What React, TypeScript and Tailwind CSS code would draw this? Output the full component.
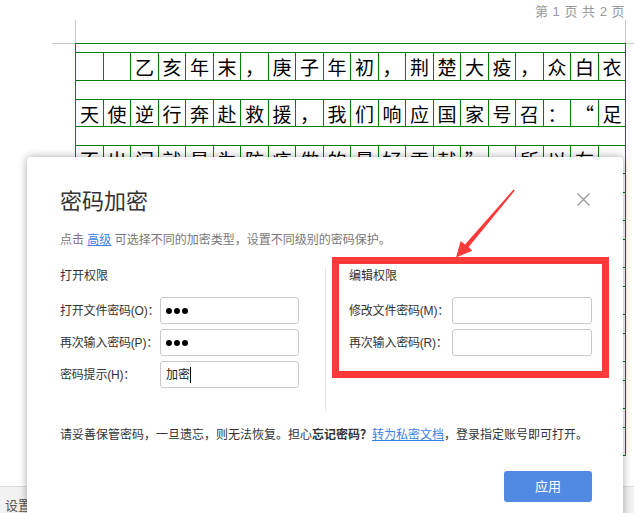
import React from 'react';

const row1 = ['', '', '乙', '亥', '年', '末', '，', '庚', '子', '年', '初', '，', '荆', '楚', '大', '疫', '，', '众', '白', '衣'];
const row2 = '天使逆行奔赴救援，我们响应国家号召：“足'.split('');
const row3 = ['不', '出', '门', '就', '是', '为', '防', '疫', '做', '的', '最', '好', '贡', '献', '”', '，', '所', '以', '在', ''];
const empty = Array(20).fill('');

const CharRow = ({ chars, h }: { chars: string[]; h: string }) => (
  <>
    {chars.map((c, i) => (
      <div key={i} className={`${h} border-r border-b border-[#008000] flex items-center justify-center text-[19px] leading-none text-black`}>
        {c}
      </div>
    ))}
  </>
);

const Spacer = () => <div className="col-span-full h-[19px] border-r border-b border-[#008000]" />;

const Field = ({ label, labelW, inputW, children }: { label: string; labelW: string; inputW: string; children?: React.ReactNode }) => (
  <div className="flex items-center">
    <span className={`${labelW} shrink-0 whitespace-nowrap text-[12px] tracking-[-0.2px] text-[#333]`}>{label}</span>
    <div className={`${inputW} h-[27px] border border-[#cacaca] rounded-[3px] bg-white flex items-center pl-[5px]`}>{children}</div>
  </div>
);

const Dots = () => (
  <div className="flex gap-[2px]">
    <span className="w-[6px] h-[6px] rounded-full bg-black" />
    <span className="w-[6px] h-[6px] rounded-full bg-black" />
    <span className="w-[6px] h-[6px] rounded-full bg-black" />
  </div>
);

export default function App() {
  return (
    <div className="relative w-[634px] h-[513px] overflow-hidden bg-white flex flex-col font-['Liberation_Sans','Noto_Sans_CJK_SC',sans-serif]">
      {/* document page */}
      <div className="h-[20px] flex justify-end pr-[9px] pt-[4px] text-[13px] leading-[15px] tracking-[0.5px] text-[#999]">
        第 1 页 共 2 页
      </div>
      <div className="h-[24px] flex">
        <div className="w-[52px]" />
        <div className="w-[24px] border-r border-b border-[#c8c8c8]" />
        <div className="w-[549px]" />
        <div className="w-[9px] border-l border-b border-[#c8c8c8]" />
      </div>
      <div className="flex-1 min-h-0 overflow-hidden -mt-px font-['Noto_Sans_CJK_SC',sans-serif]">
        <div className="ml-[75px] w-[551px] grid grid-cols-[repeat(10,28px_27px)] border-l border-t border-[#008000]">
          <div className="col-span-full h-[9px] border-r border-b border-[#008000]" />
          <CharRow chars={row1} h="h-[28px]" />
          <Spacer />
          <CharRow chars={row2} h="h-[27px]" />
          <Spacer />
          <CharRow chars={row3} h="h-[28px]" />
          <Spacer />
          <CharRow chars={empty} h="h-[28px]" />
          <Spacer />
          <CharRow chars={empty} h="h-[28px]" />
          <Spacer />
          <CharRow chars={empty} h="h-[28px]" />
          <Spacer />
          <CharRow chars={empty} h="h-[28px]" />
          <Spacer />
          <CharRow chars={empty} h="h-[28px]" />
          <Spacer />
          <CharRow chars={empty} h="h-[28px]" />
        </div>
      </div>
      <div className="h-[27px] shrink-0 bg-[#f2f2f2] border-t border-[#dcdcdc] pl-[5px] pt-[11px] text-[13px] leading-[16px] text-[#555] overflow-hidden">
        设置
      </div>

      {/* dialog */}
      <div className="absolute left-[27px] top-[157px] w-[596px] h-[380px] bg-white rounded-[4px] shadow-[0_0_9px_rgba(0,0,0,0.35)] pl-[33px] pr-[31px] pt-[30px]">
        <div className="flex justify-between items-start">
          <h2 className="text-[22px] leading-[30px] text-[#333]">密码加密</h2>
          <svg className="mt-[6px] mr-[2px]" width="13" height="13" viewBox="0 0 13 13">
            <path d="M0.5 0.5 L12.5 12.5 M12.5 0.5 L0.5 12.5" stroke="#9a9a9a" strokeWidth="1.3" />
          </svg>
        </div>
        <p className="mt-[14px] text-[12px] leading-[18px] text-[#777]">
          点击 <span className="text-[#3d7fe6] underline">高级</span> 可选择不同的加密类型，设置不同级别的密码保护。
        </p>

        <div className="mt-[18px] flex h-[144px]">
          <div className="w-[265px]">
            <div className="text-[12px] leading-[18px] text-[#333]">打开权限</div>
            <div className="mt-[12px] flex flex-col gap-[5px]">
              <Field label="打开文件密码(O)：" labelW="w-[100px]" inputW="w-[139px]">
                <Dots />
              </Field>
              <Field label="再次输入密码(P)：" labelW="w-[100px]" inputW="w-[139px]">
                <Dots />
              </Field>
              <Field label="密码提示(H)：" labelW="w-[100px]" inputW="w-[139px]">
                <span className="text-[12px] text-[#222]">加密</span>
                <span className="inline-block w-px h-[16px] bg-black" />
              </Field>
            </div>
          </div>
          <div className="flex-1 border-l border-[#e6e6e6] pl-[23px]">
            <div className="text-[12px] leading-[18px] text-[#333]">编辑权限</div>
            <div className="mt-[12px] flex flex-col gap-[5px]">
              <Field label="修改文件密码(M)：" labelW="w-[103px]" inputW="w-[140px]" />
              <Field label="再次输入密码(R)：" labelW="w-[103px]" inputW="w-[140px]" />
            </div>
          </div>
        </div>

        <p className="mt-[15px] text-[12px] leading-[18px] text-[#333]">
          请妥善保管密码，一旦遗忘，则无法恢复。担心<b className="font-bold">忘记密码？</b>
          <span className="text-[#3d7fe6] underline">转为私密文档</span>，登录指定账号即可打开。
        </p>

        <div className="mt-[27px] flex justify-end">
          <button className="w-[88px] h-[31px] rounded-[3px] bg-[#518ae3] text-white text-[13px]">应用</button>
        </div>

        {/* annotation box */}
        <div className="absolute left-[305px] top-[100px] w-[277px] h-[121px] border-[7px] border-[#fc3a3a]" />
      </div>

      {/* annotation arrow */}
      <svg className="absolute left-[450px] top-[185px]" width="70" height="75" viewBox="0 0 70 75">
        <polygon points="6,72.5 10.7,56 15,59.5 63.5,4.5 64.8,5.6 18.7,62 22.3,65.7" fill="#fc3a3a" />
      </svg>
    </div>
  );
}
